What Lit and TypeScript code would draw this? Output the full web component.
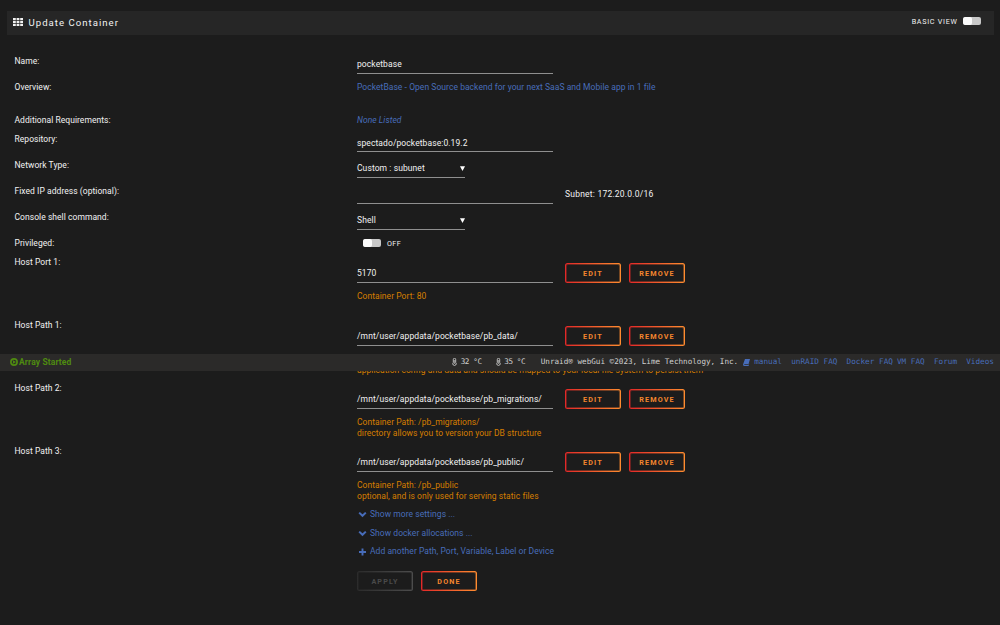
import { LitElement, html, css, svg } from "lit";
import { customElement, property } from "lit/decorators.js";

@customElement("toggle-switch")
class ToggleSwitch extends LitElement {
  static styles = css`
    :host { display: block; width: 18px; height: 8px; border-radius: 2px; background: #c8c8c8; overflow: hidden; }
    .knob { width: 9px; height: 8px; border-radius: 2px; background: #fafafa; }
  `;
  render() {
    return html`<div class="knob"></div>`;
  }
}

@customElement("action-button")
class ActionButton extends LitElement {
  @property() label = "";
  @property({ type: Boolean, reflect: true }) disabled = false;
  static styles = css`
    :host { display: block; --a: #e22828; --b: #ff8c2f; color: #f5862e; }
    :host([disabled]) { --a: #2b2b2b; --b: #4c4c4c; color: #4a4a4a; }
    .frame { box-sizing: border-box; width: 56px; height: 20px; padding: 1px; border-radius: 2.5px; background: linear-gradient(90deg, var(--a), var(--b)); }
    .face { box-sizing: border-box; height: 18px; border: 1px solid rgba(28, 28, 28, .6); border-radius: 1.5px; background: #1c1c1c padding-box; display: flex; align-items: center; justify-content: center;
      font: 700 7.2px/16px "Roboto", sans-serif; letter-spacing: 1.15px; padding-top: 1px; }
  `;
  render() {
    return html`<div class="frame"><div class="face">${this.label}</div></div>`;
  }
}

const chevron = svg`<path d="M1.2 2.6 4.5 5.8 7.8 2.6" fill="none" stroke="currentColor" stroke-width="2"/>`;
const plus = svg`<path d="M4.5 .5v7M1 4h7" fill="none" stroke="currentColor" stroke-width="1.9"/>`;

interface Mount { label: string; value: string; notes: string[]; }

const mounts: Mount[] = [
  { label: "Host Port 1:", value: "5170", notes: ["Container Port: 80"] },
  { label: "Host Path 1:", value: "/mnt/user/appdata/pocketbase/pb_data/", notes: ["", "application config and data and should be mapped to your local file system to persist them"] },
  { label: "Host Path 2:", value: "/mnt/user/appdata/pocketbase/pb_migrations/", notes: ["Container Path: /pb_migrations/", "directory allows you to version your DB structure"] },
  { label: "Host Path 3:", value: "/mnt/user/appdata/pocketbase/pb_public/", notes: ["Container Path: /pb_public", "optional, and is only used for serving static files"] },
];

@customElement("app-root")
class AppRoot extends LitElement {
  static styles = css`
    :host { display: block; position: relative; box-sizing: border-box; width: 1000px; height: 625px; overflow: hidden; background: #1c1c1c;
      color: #f2f2f2; font: 8.5px/11px "Roboto", sans-serif; letter-spacing: .05px; padding: 11px 6px 0 7px; white-space: nowrap; }
    .title { display: flex; align-items: center; height: 23.5px; padding: 0 13px 0 6px; background: #262626; }
    .title svg { width: 10px; height: 8px; margin-right: 5.5px; margin-top: -1.5px; }
    .title h1 { margin: 0; font-size: 9.6px; font-weight: 400; letter-spacing: 1.02px; line-height: 22px; }
    .basic { margin-left: auto; margin-right: 5.5px; font-size: 7.2px; letter-spacing: .7px; margin-top: -3px; }
    .title toggle-switch { margin-top: -3px; }
    .form { padding: 21.4px 0 0 7.5px; }
    .row { display: grid; grid-template-columns: 342.5px auto; align-items: start; height: 26px; }
    .row.overview { height: 33.2px; }
    .row.short { height: 19px; }
    .row.repo { height: 25.8px; }
    .row.mount { height: 63px; }
    .value { display: flex; }
    .field { box-sizing: border-box; width: 195.5px; height: 18.1px; padding-top: 3.5px; border-bottom: 1px solid #8f8f8f; letter-spacing: .09px; }
    .select { display: flex; justify-content: space-between; width: 108px; }
    .select svg { width: 5px; height: 5px; margin-top: 3px; }
    .mount .field { height: 26.1px; padding-top: 11px; }
    .subnet { margin: 3.5px 0 0 12.5px; letter-spacing: .22px; }
    .blue { color: #486dba; }
    .italic { font-style: italic; }
    .off { display: flex; align-items: center; padding: 0 0 0 6px; gap: 6px; font-size: 7.2px; letter-spacing: .4px; }
    .buttons { display: flex; gap: 8px; padding: 6.5px 0 0 12.5px; }
    .notes { padding-top: 7.2px; color: #d67e00; }
    .notes div { min-height: 11px; }
    .more { display: grid; grid-auto-rows: 18.7px; padding-left: 342.5px; }
    .more div { display: flex; align-items: flex-start; }
    .more svg { width: 9px; height: 9px; margin: 1.5px 3.5px 0 .5px; }
    .actions { display: flex; gap: 8px; padding: 6.2px 0 0 342.5px; }
    .status { position: absolute; left: 0; top: 354px; width: 1000px; height: 16.5px; box-sizing: border-box; padding: 0 6px 0 9.5px;
      display: flex; align-items: center; background: #2b2a29; color: #cfcfcf; font: 7.63px/16px "DejaVu Sans Mono", monospace; letter-spacing: 0; }
    .array { display: flex; align-items: center; gap: 1.5px; color: #4f8a10; font: 700 8.5px/16px "Roboto", sans-serif; letter-spacing: .12px; }
    .array svg { width: 8px; height: 8px; }
    .temps { display: flex; margin-left: auto; gap: 14px; margin-right: 15.5px; letter-spacing: -.38px; }
    .temps span { display: flex; align-items: center; gap: 3.5px; }
    .temps svg { width: 5px; height: 8px; }
    .links { display: flex; align-items: center; color: #486dba; font-size: 7.7px; }
    .links svg { width: 7px; height: 7px; margin: 0 4px 0 5px; }
    .g2 { margin-left: 9.2px; }
    .g1 { margin-left: 4px; }
  `;

  text(label: string, value: string, kind: string) {
    return html`<div class="row ${kind}"><div>${label}</div><div class="value"><div class="field">${value}</div></div></div>`;
  }

  select(label: string, value: string) {
    return html`<div class="row"><div>${label}</div><div class="field select"><span>${value}</span>
      <svg viewBox="0 0 5 5"><path d="M0 .2h5L2.5 5z" fill="#fff"/></svg></div></div>`;
  }

  temp(value: string) {
    return html`<span><svg viewBox="0 0 5 8"><path d="M1.3 4.6V1.5a1.1 1.1 0 0 1 2.4 0v3.1a1.7 1.7 0 1 1-2.4 0z" fill="none" stroke="currentColor" stroke-width=".9"/><path d="M2.5 2v4" stroke="currentColor" stroke-width=".6"/></svg>${value}</span>`;
  }

  mount(m: Mount) {
    return html`<div class="row mount"><div>${m.label}</div><div>
      <div class="value"><div class="field">${m.value}</div>
        <div class="buttons"><action-button label="EDIT"></action-button><action-button label="REMOVE"></action-button></div></div>
      <div class="notes">${m.notes.map((n) => html`<div>${n}</div>`)}</div></div></div>`;
  }

  render() {
    return html`
      <div class="title">
        <svg viewBox="0 0 10 8"><path d="M0 0h2.8v2.2H0zM3.6 0h2.8v2.2H3.6zM7.2 0H10v2.2H7.2zM0 2.9h2.8v2.2H0zM3.6 2.9h2.8v2.2H3.6zM7.2 2.9H10v2.2H7.2zM0 5.8h2.8V8H0zM3.6 5.8h2.8V8H3.6zM7.2 5.8H10V8H7.2z" fill="#f2f2f2"/></svg>
        <h1>Update Container</h1><span class="basic">BASIC VIEW</span><toggle-switch></toggle-switch>
      </div>
      <div class="form">
        ${this.text("Name:", "pocketbase", "name")}
        <div class="row overview"><div>Overview:</div><div class="blue">PocketBase - Open Source backend for your next SaaS and Mobile app in 1 file</div></div>
        <div class="row short"><div>Additional Requirements:</div><div class="blue italic">None Listed</div></div>
        ${this.text("Repository:", "spectado/pocketbase:0.19.2", "repo")}
        ${this.select("Network Type:", "Custom : subunet")}
        <div class="row"><div>Fixed IP address (optional):</div><div class="value"><div class="field"></div><div class="subnet">Subnet: 172.20.0.0/16</div></div></div>
        ${this.select("Console shell command:", "Shell")}
        <div class="row short"><div>Privileged:</div><div class="off"><toggle-switch></toggle-switch>OFF</div></div>
        ${mounts.map((m) => this.mount(m))}
        <div class="more">
          <div class="blue"><svg viewBox="0 0 9 9">${chevron}</svg>Show more settings ...</div>
          <div class="blue"><svg viewBox="0 0 9 9">${chevron}</svg>Show docker allocations ...</div>
          <div class="blue"><svg viewBox="0 0 9 9">${plus}</svg>Add another Path, Port, Variable, Label or Device</div>
        </div>
        <div class="actions"><action-button label="APPLY" disabled></action-button><action-button label="DONE"></action-button></div>
      </div>
      <div class="status">
        <div class="array"><svg viewBox="0 0 8 8"><circle cx="4" cy="4" r="3.1" fill="none" stroke="currentColor" stroke-width="1.7"/><path d="M3 2.2v3.6L6 4z" fill="currentColor"/></svg>Array Started</div>
        <div class="temps">${this.temp("32 °C")}${this.temp("35 °C")}</div>
        <span>Unraid® webGui ©2023, Lime Technology, Inc.</span>
        <div class="links"><svg viewBox="0 0 7 7"><path d="M2 0h5L5.6 5H1.3v.8h4.4L6.6 3 5.6 7H.6L0 5.6z" fill="currentColor"/></svg>manual<span class="g2">unRAID FAQ</span><span class="g2">Docker FAQ</span><span class="g1">VM FAQ</span><span class="g2">Forum</span><span class="g2">Videos</span></div>
      </div>`;
  }
}
